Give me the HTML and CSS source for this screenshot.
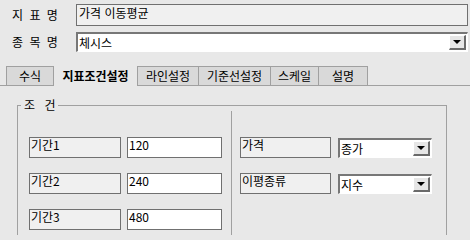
FILE: index.html
```html
<!DOCTYPE html>
<html lang="ko">
<head>
<meta charset="utf-8">
<link rel="stylesheet" href="styles.css">
</head>
<body>
<div class="page">
  <div class="frow r1">
    <span class="flabel">지 표 명</span>
    <div class="tbox ro">가격 이동평균</div>
  </div>
  <div class="frow r2">
    <span class="flabel">종 목 명</span>
    <div class="combo wide"><span class="cval">체시스</span><span class="dd"><span class="tri"></span></span></div>
  </div>
  <div class="tabs">
    <div class="tab t1">수식</div>
    <div class="tab sel t2">지표조건설정</div>
    <div class="tab t3">라인설정</div>
    <div class="tab t4">기준선설정</div>
    <div class="tab t5">스케일</div>
    <div class="tab t6">설명</div>
  </div>
  <fieldset class="group">
    <legend>조 건</legend>
    <div class="gcols">
      <div class="gcol left">
        <div class="grow"><div class="lbox">기간1</div><div class="ibox">120</div></div>
        <div class="grow"><div class="lbox">기간2</div><div class="ibox">240</div></div>
        <div class="grow"><div class="lbox">기간3</div><div class="ibox">480</div></div>
      </div>
      <div class="gcol right">
        <div class="grow"><div class="lbox r">가격</div><div class="combo small"><span class="cval">종가</span><span class="dd"><span class="tri"></span></span></div></div>
        <div class="grow"><div class="lbox r">이평종류</div><div class="combo small"><span class="cval">지수</span><span class="dd"><span class="tri"></span></span></div></div>
      </div>
    </div>
  </fieldset>
</div>
</body>
</html>
```
FILE: styles.css
```css
html, body {
  margin: 0;
  padding: 0;
}
body {
  width: 470px;
  height: 235px;
  overflow: hidden;
  background: #e8e8e8;
  font-family: "Noto Sans CJK KR", "Noto Sans", sans-serif;
  font-size: 12px;
  color: #000;
}
.page {
  padding-top: 4px;
  height: 231px;
  overflow: hidden;
}
.frow {
  display: flex;
  align-items: center;
}
.r1 { height: 22px; }
.r2 { height: 20px; margin-top: 6px; }
.flabel {
  box-sizing: border-box;
  width: 76px;
  padding-left: 12px;
  word-spacing: 3px;
  line-height: 14px;
}
.tbox {
  box-sizing: border-box;
  width: 392px;
  height: 22px;
  border: 1px solid #707070;
  background: #f0f0f0;
  padding: 0 2px;
  line-height: 15px;
}
.combo {
  box-sizing: border-box;
  display: flex;
  align-items: center;
  justify-content: space-between;
  background: #fff;
  border-style: solid;
  border-width: 2px 1px 1px 2px;
  border-color: #777 #fff #fff #777;
}
.combo.wide {
  width: 392px;
  height: 20px;
  padding-right: 1px;
}
.cval {
  padding-left: 1px;
  line-height: 16px;
}
.dd {
  box-sizing: border-box;
  width: 17px;
  height: 15px;
  background: #e6e6e6;
  border-style: solid;
  border-width: 1px 2px 2px 1px;
  border-color: #fff #6a6a6a #6a6a6a #fff;
  display: flex;
  align-items: center;
  justify-content: center;
}
.tri {
  width: 0;
  height: 0;
  border-left: 4px solid transparent;
  border-right: 4px solid transparent;
  border-top: 4px solid #000;
}
.tabs {
  display: flex;
  margin-top: 14px;
  height: 19px;
  width: 468px;
  padding-left: 6px;
  box-sizing: content-box;
  border-bottom: 1px solid #a0a0a0;
}
.tab {
  box-sizing: border-box;
  height: 19px;
  border: 1px solid #a0a0a0;
  border-bottom: none;
  background: #d9d9d9;
  text-align: center;
  line-height: 17px;
}
.tab.sel {
  height: 20px;
  margin-bottom: -1px;
  border: none;
  background: #e8e8e8;
  font-weight: bold;
  line-height: 19px;
}
.t1 { width: 48px; }
.t2 { width: 83px; }
.t3 { width: 62px; }
.t4 { width: 73px; margin-left: -1px; }
.t5 { width: 49px; margin-left: -1px; }
.t6 { width: 50px; margin-left: -1px; }
.group {
  box-sizing: border-box;
  width: 430px;
  height: 170px;
  margin: 13px 0 0 17px;
  padding: 0;
  border: 1px solid #a0a0a0;
  min-inline-size: 0;
}
.group legend {
  margin-left: 3px;
  padding: 0 3px;
  line-height: 12px;
  word-spacing: 6px;
}
.gcols {
  display: flex;
  height: 160px;
}
.gcol {
  box-sizing: border-box;
  padding-top: 26px;
}
.gcol.left {
  width: 214px;
  padding-left: 11px;
  border-right: 1px solid #a0a0a0;
}
.gcol.right {
  padding-left: 8px;
}
.grow {
  display: flex;
  align-items: flex-start;
  height: 21px;
  margin-bottom: 15px;
}
.lbox {
  box-sizing: border-box;
  width: 92px;
  height: 21px;
  border: 1px solid #707070;
  background: #f0f0f0;
  padding: 0 1px;
  line-height: 13px;
}
.lbox.r { width: 91px; }
.ibox {
  box-sizing: border-box;
  width: 95px;
  height: 21px;
  margin-left: 6px;
  border: 1px solid #707070;
  background: #fff;
  padding: 0 1px;
  line-height: 14px;
}
.combo.small {
  width: 94px;
  height: 20px;
  margin-left: 7px;
  margin-top: 1px;
  padding-right: 1px;
}
```
